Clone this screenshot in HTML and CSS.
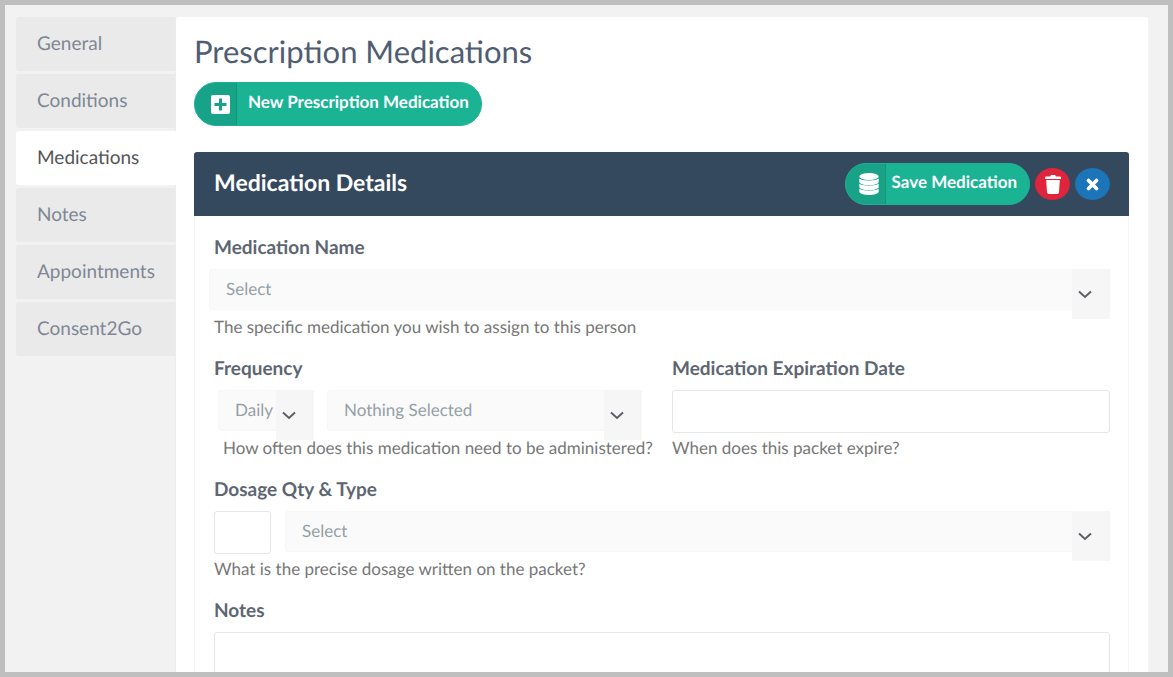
FILE: index.html
```
<!DOCTYPE html>
<html lang="en">
 <head>
  <meta charset="utf-8">
  <title>Prescription Medications</title>
  <meta name="viewport" content="width=device-width,initial-scale=1.0">
  <link rel="stylesheet" href="styles.css">
 </head>
 <body>
  <div class="frame">
   <nav class="tabs">
    <a href="#general">General</a>
    <a href="#conditions">Conditions</a>
    <a href="#medications" class="active">Medications</a>
    <a href="#notes">Notes</a>
    <a href="#appointments">Appointments</a>
    <a href="#consent">Consent2Go</a>
   </nav>
   <main class="panel">
    <h1>Prescription Medications</h1>
    <button type="button" class="btn btn-new">
     <span class="btn-icon"><svg width="19" height="19" viewBox="0 0 19 19"><path fill="#fff" fill-rule="evenodd" d="M2 0h15a2 2 0 0 1 2 2v15a2 2 0 0 1-2 2H2a2 2 0 0 1-2-2V2a2 2 0 0 1 2-2zM8 3.500V8H3.500v3H8v4.500h3V11h4.500V8H11V3.500z"/></svg></span>
     <span class="btn-text">New Prescription Medication</span>
    </button>
    <form class="card">
     <header class="card-head">
      <h2>Medication Details</h2>
      <button type="button" class="btn btn-save">
       <span class="btn-icon"><svg width="20" height="22" viewBox="0 0 20 22" fill="#fff"><ellipse cx="10" cy="3.5" rx="9.7" ry="3.5"/><path d="M.3 5.600c2.500 2.600 16.900 2.600 19.400 0v3.200c0 4.600-19.400 4.600-19.400 0z"/><path d="M.3 10.600c2.500 2.800 16.900 2.800 19.400 0v3.200c0 4.600-19.400 4.600-19.400 0z"/><path d="M.3 15.600c2.500 2.800 16.900 2.800 19.400 0v2.900c0 4.600-19.400 4.600-19.400 0z"/></svg></span>
       <span class="btn-text">Save Medication</span>
      </button>
      <button type="button" class="round delete" aria-label="Delete"><svg width="16" height="19" viewBox="0 0 16 19" fill="#fff"><path d="M1 1.500h4L6 0h4l1 1.500h4q1 0 1 1V4H0V2.500q0-1 1-1zM1.200 5h13.600l-.8 12.300Q13.900 19 12.200 19H3.800Q2.100 19 2 17.300z"/></svg></button>
      <button type="button" class="round close" aria-label="Close"><svg width="13" height="13" viewBox="0 0 13 13"><path d="M2.500 2.500l8 8M10.500 2.500l-8 8" stroke="#fff" stroke-width="3.600" stroke-linecap="round"/></svg></button>
     </header>
     <div class="card-body">
      <div class="field">
       <label for="name">Medication Name</label>
       <div class="controls wide">
        <div class="select"><select id="name"><option>Select</option></select><span class="arrow"><svg width="14" height="9" viewBox="0 0 14 9"><path d="M1 1.500l6 5.500 6-5.500"/></svg></span></div>
       </div>
       <p>The specific medication you wish to assign to this person</p>
      </div>
      <div class="row">
       <div class="field">
        <label for="often">Frequency</label>
        <div class="controls frequency">
         <div class="select short"><select id="often"><option>Daily</option></select><span class="arrow"><svg width="14" height="9" viewBox="0 0 14 9"><path d="M1 1.500l6 5.500 6-5.500"/></svg></span></div>
         <div class="select"><select aria-label="Times"><option>Nothing Selected</option></select><span class="arrow"><svg width="14" height="9" viewBox="0 0 14 9"><path d="M1 1.500l6 5.500 6-5.500"/></svg></span></div>
        </div>
        <p class="indent">How often does this medication need to be administered?</p>
       </div>
       <div class="field">
        <label for="expiry">Medication Expiration Date</label>
        <div class="controls"><input id="expiry" type="text"></div>
        <p>When does this packet expire?</p>
       </div>
      </div>
      <div class="field">
       <label for="qty">Dosage Qty &amp; Type</label>
       <div class="controls dosage">
        <input id="qty" class="qty" type="text">
        <div class="select"><select aria-label="Dosage type"><option>Select</option></select><span class="arrow"><svg width="14" height="9" viewBox="0 0 14 9"><path d="M1 1.500l6 5.500 6-5.500"/></svg></span></div>
       </div>
       <p>What is the precise dosage written on the packet?</p>
      </div>
      <div class="field">
       <label for="notes">Notes</label>
       <textarea id="notes" rows="5"></textarea>
      </div>
     </div>
    </form>
   </main>
  </div>
 </body>
</html>
```

FILE: styles.css
```
* {box-sizing:border-box}
body {margin:0; background:#f2f2f2; font-family:Lato, "Open Sans", sans-serif; font-size:17px; color:#676a6c; text-rendering:geometricPrecision}
button, input, select, textarea {font:inherit; text-rendering:inherit}
h1, h2, p {margin:0}

.frame {display:flex; height:100vh; overflow:hidden; border:5px solid #bfbfbf; padding:12px 20px 0 11px}

.tabs {flex:none; width:160px; display:flex; flex-direction:column; gap:3px; border-right:1px solid #ececec}
.tabs a {height:54px; padding:0 0 0 21px; line-height:53px; font-size:19px; color:#7f8795; background:#eaeaea; border-radius:3px 0 0 3px; text-decoration:none}
.tabs .active {background:#fff; color:#555; margin-right:-1px}

.panel {flex:1; min-width:0; background:#fff; border-radius:3px 3px 0 0; padding:17px 19px 0 18px}
h1 {font-size:31px; line-height:34px; font-weight:400; color:#4f5d73; margin-bottom:14px}

.btn {display:inline-flex; padding:0; border:1px solid #1ab394; border-radius:22px; overflow:hidden; background:#1ab394; color:#fff; font-weight:700; cursor:pointer}
.btn-icon {display:flex; align-items:center; justify-content:center; background:#18a287; border-right:1px solid #179378}
.btn-new {display:flex; height:44px}
.btn-new .btn-icon {width:42px; padding-left:10px}
.btn-new .btn-text {padding:0 12px 0 11px; line-height:38px}
.btn-save {height:42px; margin-right:5px}
.btn-save .btn-icon {width:40px; padding-left:8px}
.btn-save .btn-text {padding:0 12px 0 6px; line-height:36px}

.card {margin-top:26px; border:1px solid #f5f5f5; border-top:0}
.card-head {display:flex; align-items:center; height:64px; margin:0 -1px; padding:0 19px 0 20px; background:#34495e; border-radius:3px 3px 0 0}
h2 {flex:1; font-size:23px; line-height:28px; font-weight:700; color:#fff; padding-bottom:4px}
.round {display:flex; align-items:center; justify-content:center; width:35px; height:32px; padding:0; border:0; border-radius:50%; cursor:pointer}
.delete {background:#e0243b; margin-right:5px}
.close {background:#1c74b9}

.card-body {padding:20px 18px 0 19px}
.field {flex:1; min-width:0; margin-bottom:18px}
.field label {display:block; font-size:19px; line-height:24px; font-weight:700; color:#5e6672; margin-bottom:9px}
.field p {line-height:24px; margin-top:3px; color:#777}
.field .indent {padding-left:9px; white-space:nowrap}
.row {display:grid; grid-template-columns:428fr 438fr; gap:30px}

.controls {display:flex; height:43px}
.wide {margin-left:-5px}
.frequency {gap:13px; padding-left:4px}
.dosage {gap:14px}
input, textarea {display:block; width:100%; background:#fff; border:1px solid #e5e6e7; border-radius:3px; outline:none}
.dosage .qty {width:57px}
textarea {resize:none}
.select {position:relative; flex:1; height:41px}
.short {flex:none; width:96px}
select {appearance:none; width:100%; height:41px; padding:0 40px 2px 16px; border:1px solid #f7f7f7; border-radius:3px; background:#fafafa; color:#95a0a5; outline:none}
.short select {padding-right:0}
/* arrow block hangs below its select */
.arrow {position:absolute; top:0; right:0; width:38px; height:50px; display:flex; align-items:center; padding-left:6px; background:#f6f6f6; pointer-events:none}
.arrow path {fill:none; stroke:#5c6066; stroke-width:2}
```
